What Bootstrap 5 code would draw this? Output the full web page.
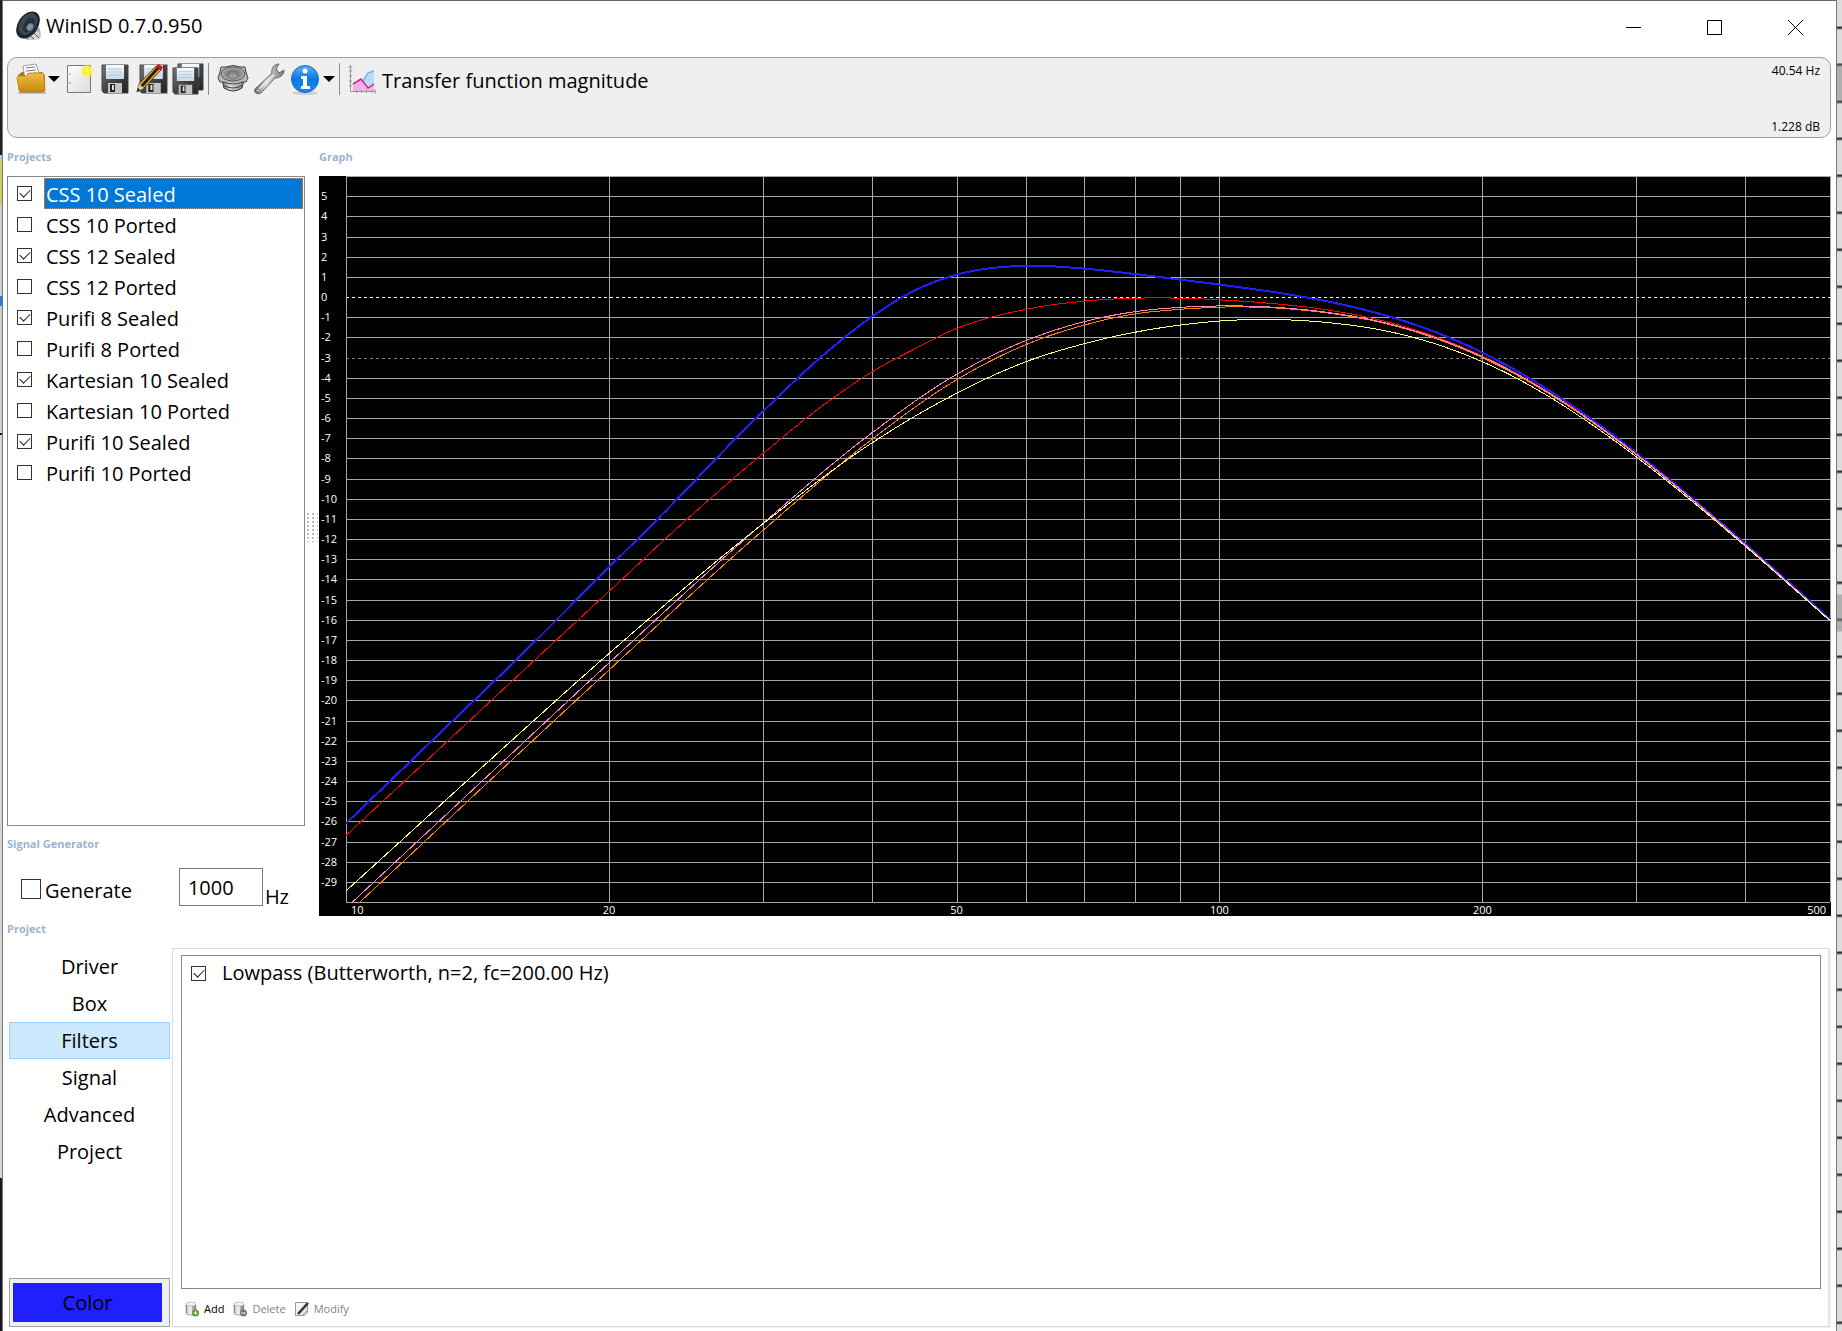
<!DOCTYPE html>
<html lang="en">
<head>
<meta charset="utf-8">
<meta name="viewport" content="width=device-width, initial-scale=1">
<title>WinISD 0.7.0.950</title>
<link href="https://cdn.jsdelivr.net/npm/bootstrap@5.3.0/dist/css/bootstrap.min.css" rel="stylesheet">
<style>
  body { font-family: "Open Sans", "Noto Sans", sans-serif; font-size: 20px; line-height: 24px; color: #000; background: #fff; }
  button { font: inherit; color: inherit; background: none; border: 0; padding: 0; }
  .edge-left { width: 2px; background: linear-gradient(#202024 0 155px, #c8c8c8 155px 161px, #cfcf60 161px 205px, #d0d0d0 205px 296px, #2a80d0 296px 306px, #d0d0d0 306px 433px, #111 433px 435px, #d4d4d4 435px 1178px, #18181c 1178px); }
  .edge-right { width: 6px; border-left: 1px solid #777; background: linear-gradient(transparent 64px, #8888 65px 101px, transparent 102px 594px, #8888 595px 631px, transparent 632px), repeating-linear-gradient(#dcdcdc 0 26px, #333 27px 28px, #dcdcdc 30px 37px); }
  .win { min-width: 0; border-top: 1px solid #666; border-left: 1px solid #777; padding: 0 5px 4px 4px; }
  .titlebar { height: 56px; padding: 0 0 6px 7px; margin-right: -5px; }
  .caption-btn { width: 81px; height: 50px; }
  .toolpanel { height: 81px; border: 1px solid #a0a0a0; border-radius: 10px; background: #efefef; padding: 5px 10px 2px 8px; }
  .tool-gap { margin-left: 6px; }
  .tool-sep { width: 1px; height: 32px; background: #8e8e8e; }
  .readout { font-size: 12px; line-height: 16px; }
  .cap { font-size: 11px; line-height: 16px; font-weight: 700; color: #99b4d1; }
  .cap-top { padding: 11px 0 11px; }
  .cap-signal { padding-top: 10px; }
  .cap-project { padding: 5px 0 11px; }
  .side { width: 298px; }
  .splitter { width: 14px; }
  .grip { width: 12px; height: 30px; background: radial-gradient(circle at 2px 2px, #bbb 1px, transparent 1px) 0 0 / 5px 4px; }
  .boxed { border: 1px solid #828790; background: #fff; }
  .projects { padding: 1px 0 0; }
  .proj-row { height: 31px; padding-left: 9px; }
  .proj-name { margin-left: 12px; padding: 4px 1px 2px 2px; line-height: 25px; margin-right: 1px; }
  .proj-row.picked .proj-name { background: #0078d7; color: #fff; outline: 1px dotted #ff8728; outline-offset: -1px; }
  .tick { appearance: none; width: 15px; height: 15px; margin: 0; flex: none; border: 1px solid #333; background: #fff; position: relative; }
  .tick:checked::before { content: ""; position: absolute; left: 2px; top: 2px; width: 10px; height: 6px; border-left: 1px solid #222; border-bottom: 1px solid #222; transform: rotate(-45deg); }
  .tick-lg { width: 20px; height: 20px; }
  .siggen { padding: 16px 0 10px 14px; }
  .freq { width: 84px; height: 38px; border: 1px solid #7a7a7a; padding: 0 8px; color: #000; }
  .freq-unit { line-height: 18px; padding-left: 2px; }
  .graph-col { min-width: 0; }
  .graph-box { background: #000; min-height: 300px; }
  .graph-box svg { display: block; width: 100%; }
  .axis-text { fill: #fff; font-size: 11px; }
  .tabs { width: 165px; padding: 0 2px; }
  .tab-btn { height: 37px; border: 1px solid transparent; }
  .tab-btn.current { background: #cce8ff; border-color: #99d1ff; }
  .color-btn { height: 49px; border: 1px solid #a0a0a0; background: #f0f0f0; padding: 4px 7px 4px 3px; }
  .color-btn span { background: #2020ff; height: 39px; line-height: 39px; }
  .pane { border: 1px solid #dcdcdc; box-shadow: 2px 1px #f0f0f0; padding: 6px 7px 9px 8px; margin-right: 2px; }
  .filters { min-height: 334px; padding: 5px 9px; }
  .filter-tools { padding: 12px 3px 0; }
  .mini { font-size: 11px; line-height: 16px; }
  .mini:disabled { color: #838383; }
</style>
<script src="https://cdn.jsdelivr.net/npm/bootstrap@5.3.0/dist/js/bootstrap.bundle.min.js"></script>
</head>
<body>
<svg width="0" height="0" class="position-absolute" aria-hidden="true">
  <defs>
    <linearGradient id="gold" x2="0" y2="1"><stop stop-color="#f0bd48"/><stop offset="1" stop-color="#c68808"/></linearGradient>
    <linearGradient id="steel" x2="1" y2="1"><stop stop-color="#777"/><stop offset=".5" stop-color="#444"/><stop offset="1" stop-color="#222"/></linearGradient>
    <linearGradient id="paper" x2="1" y2="1"><stop stop-color="#fff"/><stop offset="1" stop-color="#d8dade"/></linearGradient>
    <linearGradient id="label" x2="0" y2="1"><stop stop-color="#f8fcff"/><stop offset="1" stop-color="#c8d8e6"/></linearGradient>
    <linearGradient id="metal"><stop stop-color="#666"/><stop offset=".4" stop-color="#ddd"/><stop offset="1" stop-color="#777"/></linearGradient>
    <linearGradient id="azure" x2="0" y2="1"><stop stop-color="#5ab2f6"/><stop offset=".5" stop-color="#0b78e0"/><stop offset="1" stop-color="#1090f4"/></linearGradient>
    <radialGradient id="cone"><stop stop-color="#aaa"/><stop offset=".4" stop-color="#777"/><stop offset="1" stop-color="#b0b0b0"/></radialGradient>
    <radialGradient id="glow"><stop stop-color="#fff"/><stop offset=".3" stop-color="#ffee20"/><stop offset=".6" stop-color="#fff04a"/><stop offset="1" stop-color="#fff04a" stop-opacity="0"/></radialGradient>
    <symbol id="floppy" viewBox="0 0 28 30" preserveAspectRatio="none">
      <path d="M1 1h26v28H3l-2-2z" fill="url(#steel)" stroke="#444"/>
      <path d="M5 1h18v14H5z" fill="url(#label)"/><path d="M7 5h14M7 8h14M7 11h14" stroke="#b4c6d4" fill="none"/>
      <path d="M7 19h14v10H7z" fill="#c4c4c4"/><path d="M9 20h5v8H9z" fill="#222"/><path d="M11 21h2v5h-2z" fill="#ddd"/>
    </symbol>
    <symbol id="drum" viewBox="0 0 16 16">
      <path d="M2 3v9c0 3 10 3 10 0V3" fill="url(#metal)" stroke="#aaa" stroke-width=".6"/><path d="M3 3v10h5V3z" fill="#fff" opacity=".6"/>
      <ellipse cx="7" cy="3" rx="5" ry="2" fill="#f4f4f4" stroke="#aaa" stroke-width=".7"/>
    </symbol>
  </defs>
</svg>
<div class="d-flex min-vh-100">
  <div class="edge-left flex-shrink-0"></div>
  <div class="win flex-fill d-flex flex-column">
    <header class="titlebar d-flex align-items-center">
      <svg width="28" height="30" viewBox="0 0 28 30" aria-hidden="true">
        <path d="M12 22l11-7c4 2 4 9 3 13l-13 1-5-4z" fill="#aaa"/><path d="M15 24l10-4 1 8-11 1z" fill="#d4d4d4"/><path d="M16 25l4 3M20 22l5 5" stroke="#555"/>
        <ellipse cx="14" cy="14" rx="10" ry="15" transform="rotate(35 14 14)" fill="#202428"/>
        <ellipse cx="14" cy="13" rx="8" ry="12" transform="rotate(35 14 13)" fill="#3a4854"/>
        <ellipse cx="15" cy="14" rx="5" ry="8" transform="rotate(35 15 14)" fill="#26303a"/>
        <ellipse cx="16" cy="16" rx="3" ry="4" transform="rotate(35 16 16)" fill="#84909a"/>
      </svg>
      <span class="ms-1 flex-fill">WinISD 0.7.0.950</span>
      <button class="caption-btn" aria-label="Minimize"><svg width="15" height="15"><path d="M0 7.5h15" stroke="#000"/></svg></button>
      <button class="caption-btn" aria-label="Maximize"><svg width="15" height="15"><path d="M.5.5h14v14H.5z" fill="none" stroke="#000"/></svg></button>
      <button class="caption-btn" aria-label="Close"><svg width="15" height="15"><path d="M0 0l15 15M15 0L0 15" stroke="#000"/></svg></button>
    </header>

    <div class="toolpanel d-flex justify-content-between">
      <div class="d-flex align-items-center align-self-start" role="toolbar" aria-label="Main">
        <button class="d-flex align-items-center" aria-label="Open project">
          <svg width="32" height="32" viewBox="0 0 32 32"><path d="M2 12l4-3h20l3 4v15H4z" fill="#a87410"/><path d="M7 3l13-2 5 15H9z" fill="#fff" stroke="#888" stroke-width=".8"/><path d="M10 5l9-1M10 8l10-1M11 11l10-1" stroke="#777"/><path d="M1 15q0-2 2-2h7l3-3h13q2 0 2 2l1 15q0 2-2 2H5q-2 0-2-2z" fill="url(#gold)" stroke="#b57d0c" stroke-width=".8"/><path d="M2 30h28" stroke="#0003" stroke-width="2"/></svg>
          <svg width="12" height="12"><path d="M0 3h12l-6 6z"/></svg>
        </button>
        <button class="tool-gap" aria-label="New project"><svg width="28" height="32" viewBox="0 0 28 32"><path d="M1.500 2.500h23v27h-23z" fill="url(#paper)" stroke="#777"/><path d="M4 10v2M4 19v2" stroke="#888"/><circle cx="21" cy="8" r="7" fill="url(#glow)"/></svg></button>
        <button class="tool-gap" aria-label="Save"><svg width="30" height="32"><use href="#floppy" x="1" y="1" width="28" height="30"/></svg></button>
        <button class="tool-gap" aria-label="Save as"><svg width="32" height="32" viewBox="0 0 32 32"><use href="#floppy" x="3" y="1" width="29" height="30"/><path d="M1 29l2-8L20 3l5 4L8 25z" fill="#f4b018" stroke="#222" stroke-width=".8"/><path d="M5 24L22 5" stroke="#222" stroke-width="3"/><path d="M20 3l3-2 4 3-2 4z" fill="#d41818"/><path d="M1 29l2-8 5 4z" fill="#e8c890"/><path d="M1 29l1-4 2 2z"/></svg></button>
        <button class="ms-1" aria-label="Save all"><svg width="32" height="32" viewBox="0 0 32 32"><use href="#floppy" x="5" width="27" height="28"/><use href="#floppy" y="4" width="27" height="28"/></svg></button>
        <span class="tool-sep ms-1"></span>
        <button class="ms-2" aria-label="Drivers"><svg width="32" height="32" viewBox="0 0 32 32"><path d="M4 12l3 13q9 6 18 0l3-13z" fill="url(#metal)" stroke="#333"/><path d="M6 22q10 6 20 0" fill="none" stroke="#444"/><path d="M4 4l4 0q8-3 16 0l4 0 1 5 2 6-2 4-4 0q-9 4-18 0l-4 0-2-4 2-6z" fill="#bbb" stroke="#444"/><ellipse cx="16" cy="11" rx="12" ry="7" fill="url(#cone)" stroke="#555"/><ellipse cx="16" cy="13" rx="5" ry="3" fill="#999" stroke="#777"/></svg></button>
        <button class="ms-1" aria-label="Options"><svg width="32" height="32" viewBox="0 0 32 32"><path d="M2 26L19 10c-1-5 2-9 7-9l-3 5 3 4 5-3c0 5-4 8-9 8L8 30c-3 2-8 0-6-4z" fill="url(#metal)" stroke="#666"/><path d="M6 26L21 12" stroke="#eee" stroke-width="1.500"/><circle cx="5" cy="27.500" r="1.500" fill="#eee" stroke="#666"/></svg></button>
        <button class="tool-gap d-flex align-items-center" aria-label="About">
          <svg width="32" height="32" viewBox="0 0 32 32"><ellipse cx="14" cy="30" rx="13" ry="2" fill="#0002"/><circle cx="14" cy="16" r="13.500" fill="url(#azure)" stroke="#1268c8"/><circle cx="14" cy="8" r="2.500" fill="#fff"/><path d="M10 13h6v10h3v3h-9v-3h2v-7h-2z" fill="#fff"/></svg>
          <svg width="12" height="12"><path d="M0 3h12l-6 6z"/></svg>
        </button>
        <span class="tool-sep ms-1"></span>
        <button class="d-flex align-items-center tool-gap" aria-label="Transfer function magnitude">
          <svg width="32" height="32" viewBox="0 0 32 32"><path d="M17 18l6-8 5-2v13l-5 4z" fill="#b8dcfa"/><path d="M17 18l5-8 6-2" fill="none" stroke="#7ab6ea" stroke-width="1.500"/><path d="M7 21l8-5 7 9 6-4v7H7z" fill="#f2b0ee"/><path d="M7 21l8-5 7 9 6-4" fill="none" stroke="#c82c78" stroke-width="1.500"/><path d="M4.500 2v26.500H30M2.500 4h4M3 8h3M3 13h3M3 18h3M3 23h3M10.500 27v3M15.500 27v3M20.500 27v3M25.500 27v3M29 26v5" stroke="#999" fill="none"/></svg>
          <span class="ps-1 pt-1">Transfer function magnitude</span>
        </button>
      </div>
      <div class="readout d-flex flex-column justify-content-between text-end"><span>40.54 Hz</span><span>1.228 dB</span></div>
    </div>

    <main class="d-flex flex-fill">
      <section class="side flex-shrink-0 d-flex flex-column">
        <div class="cap cap-top">Projects</div>
        <div class="boxed projects flex-fill" id="projects"></div>
        <div class="cap cap-signal">Signal Generator</div>
        <div class="siggen d-flex align-items-center">
          <input class="tick tick-lg mt-1" type="checkbox" id="gen">
          <label class="ms-1 mt-2 flex-fill" for="gen">Generate</label>
          <div class="d-flex align-items-end pe-3"><input class="freq" id="freq" type="text" value="1000" aria-label="Frequency"><label class="freq-unit" for="freq">Hz</label></div>
        </div>
      </section>
      <div class="splitter flex-shrink-0 d-flex align-items-center justify-content-center"><div class="grip"></div></div>
      <section class="graph-col flex-fill d-flex flex-column">
        <div class="cap cap-top">Graph</div>
        <div class="graph-box d-flex flex-fill" id="graph"><svg role="img" aria-label="Transfer function magnitude"></svg></div>
      </section>
    </main>

    <div class="cap cap-project">Project</div>
    <section class="d-flex">
      <nav class="tabs flex-shrink-0 d-flex flex-column">
        <button class="tab-btn">Driver</button>
        <button class="tab-btn">Box</button>
        <button class="tab-btn current" aria-current="page">Filters</button>
        <button class="tab-btn">Signal</button>
        <button class="tab-btn">Advanced</button>
        <button class="tab-btn">Project</button>
        <button class="color-btn mt-auto"><span class="d-block">Color</span></button>
      </nav>
      <div class="pane flex-fill d-flex flex-column">
        <div class="boxed filters flex-fill">
          <div class="d-flex align-items-center"><input class="tick" type="checkbox" id="flt" checked><label class="ms-3" for="flt">Lowpass (Butterworth, n=2, fc=200.00 Hz)</label></div>
        </div>
        <div class="filter-tools d-flex">
          <button class="mini d-flex align-items-center"><svg width="16" height="16"><use href="#drum" width="16" height="16"/><circle cx="11.500" cy="12" r="3.500" fill="#5a9c28"/><path d="M9.500 12h4M11.500 10v4" stroke="#fff"/></svg><span class="ms-1">Add</span></button>
          <button class="mini d-flex align-items-center ms-2" disabled><svg width="16" height="16"><use href="#drum" width="16" height="16"/><circle cx="11.500" cy="12" r="3.500" fill="#777"/><path d="M9.500 12h4" stroke="#fff"/></svg><span class="ms-1">Delete</span></button>
          <button class="mini d-flex align-items-center ms-2" disabled><svg width="16" height="16"><path d="M1.500 1.500h12v10l-3 3h-9z" fill="url(#paper)" stroke="#999"/><path d="M4 13L14 2" stroke="#333" stroke-width="2.500"/><path d="M9 14l5-5" stroke="#999"/></svg><span class="ms-1">Modify</span></button>
        </div>
      </div>
    </section>
  </div>
  <div class="edge-right flex-shrink-0"></div>
</div>
<script>
  // Project list
  const projects = ["CSS 10", "CSS 12", "Purifi 8", "Kartesian 10", "Purifi 10"].flatMap(n => [[n + " Sealed", true], [n + " Ported", false]]);
  document.getElementById("projects").innerHTML = projects.map(([name, on], i) =>
    `<div class="proj-row d-flex align-items-center${i ? "" : " picked"}"><input class="tick" type="checkbox" id="p${i}"${on ? " checked" : ""}><label class="proj-name flex-fill" for="p${i}">${name}</label></div>`).join("");

  // Box responses in dB by frequency, before the low-pass filter
  const curves = [
    { color: "#2020ff", width: 2, pts: [[10,-26.1],[12.546,-22],[15.66,-18],[20,-13.41],[22.75,-11],[30,-5.68],[35,-2.97],[40,-.97],[45,.38],[50,1.12],[60,1.58],[70,1.47],[80,1.25],[90,1.04],[100,.88],[141,.5],[200,.25],[300,.1],[500,.05]] },
    { color: "#ff0000", width: 1, pts: [[10,-26.7],[13.09,-22],[16.45,-18],[20,-14.6],[24.6,-11],[30,-7.77],[35,-5.44],[40,-3.71],[45,-2.51],[50,-1.55],[60,-.58],[70,-.14],[80,.05],[90,.12],[100,.12],[141,.13],[200,.08],[500,0]] },
    { color: "#ff8000", width: 1, pts: [[10,-30.65],[16.36,-22],[20,-18.5],[30,-11.58],[40,-7.05],[50,-4.09],[60,-2.33],[70,-1.33],[80,-.73],[90,-.44],[100,-.24],[141,0],[200,0],[500,0]] },
    { color: "#ff80c0", width: 1, pts: [[10,-30.3],[16.05,-22],[20,-18.15],[30,-11.23],[40,-6.73],[50,-3.82],[60,-2.13],[70,-1.16],[80,-.62],[90,-.34],[100,-.18],[141,.03],[200,.05],[500,0]] },
    { color: "#ffff80", width: 1, pts: [[10,-29.45],[15.47,-22],[20,-17.68],[30,-11.25],[40,-7.23],[50,-4.76],[60,-3.18],[70,-2.25],[80,-1.64],[90,-1.22],[100,-.93],[141,-.43],[200,-.2],[300,-.1],[500,-.03]] }
  ];
  const lowpass = f => -10 * Math.log10(1 + (f / 200) ** 4);
  // Cubic Hermite interpolation over log frequency
  function response(pts, f) {
    const x = Math.log(f), P = pts.map(p => [Math.log(p[0]), p[1]]);
    let i = 0;
    while (i < P.length - 2 && P[i + 1][0] < x) i++;
    const d = k => (P[k + 1][1] - P[k][1]) / (P[k + 1][0] - P[k][0]);
    const h = P[i + 1][0] - P[i][0], t = (x - P[i][0]) / h;
    const slope = k => k === 0 ? d(0) : k === P.length - 1 ? d(k - 1) :
      (d(k - 1) * (P[k + 1][0] - P[k][0]) + d(k) * (P[k][0] - P[k - 1][0])) / (P[k + 1][0] - P[k - 1][0]);
    const m0 = slope(i) * h, m1 = slope(i + 1) * h;
    return (2*t**3 - 3*t*t + 1) * P[i][1] + (t**3 - 2*t*t + t) * m0 + (3*t*t - 2*t**3) * P[i + 1][1] + (t**3 - t*t) * m1;
  }
  const box = document.getElementById("graph"), svg = box.querySelector("svg");
  function draw() {
    const W = box.clientWidth, H = box.clientHeight, L = 27, R = W - 1, B = H - 14;
    const X = f => L + (R - L) * Math.log(f / 10) / Math.log(50);
    const Y = db => (6 - db) / 36 * B;
    const px = v => Math.round(v) + .5;
    let s = "";
    for (let db = 6; db >= -30; db--) {
      const y = px(Y(db)), dash = db === 0 || db === -3 ? ' stroke-dasharray="3 3"' : "";
      s += `<path d="M${L} ${y}H${R}" stroke="${db === 0 ? "#fff" : db === -3 ? "#808080" : "#a8a8a8"}"${dash}/>`;
      if (db < 6 && db > -30) s += `<text class="axis-text" x="2" y="${y + 3.5}">${db}</text>`;
    }
    for (const f of [10,20,30,40,50,60,70,80,90,100,200,300,400,500])
      s += `<path d="M${Math.min(px(X(f)), W - .5)} 0V${B}" stroke="#a8a8a8"/>`;
    for (const [f, a, dx] of [[10,"start",5],[20,"middle",0],[50,"middle",0],[100,"middle",0],[200,"middle",0],[500,"end",-4]])
      s += `<text class="axis-text" x="${X(f) + dx}" y="${H - 2}" text-anchor="${a}">${f}</text>`;
    s += `<clipPath id="plot"><path d="M${L} 0H${W}V${B + 1}H${L}z"/></clipPath><g clip-path="url(#plot)" fill="none" shape-rendering="crispEdges">`;
    for (const c of curves) {
      const p = [];
      for (let x = L; x <= R; x += 3) {
        const f = 10 * Math.exp((x - L) / (R - L) * Math.log(50));
        p.push(x + " " + Y(response(c.pts, f) + lowpass(f)).toFixed(1));
      }
      p.push(R + 1 + " " + Y(response(c.pts, 500) + lowpass(500)).toFixed(1));
      s += `<path d="M${p.join("L")}" stroke="${c.color}" stroke-width="${c.width}"/>`;
    }
    svg.innerHTML = s + "</g>";
  }
  draw();
  addEventListener("resize", draw);
</script>
</body>
</html>
